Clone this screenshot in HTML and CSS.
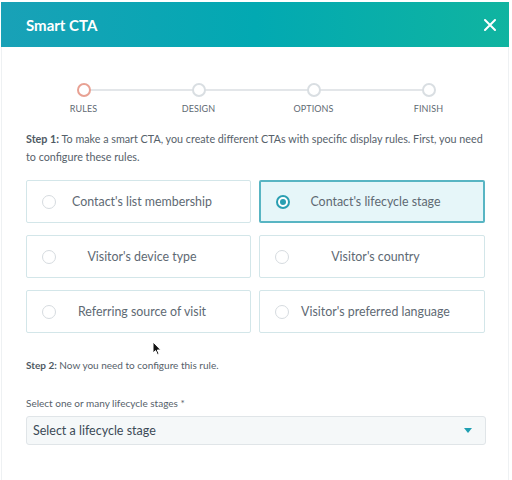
FILE: index.html
```html
<!DOCTYPE html>
<html lang="en">
<head>
<meta charset="utf-8">
<title>Smart CTA</title>
<link rel="stylesheet" href="styles.css">
</head>
<body>
<div class="modal">
  <header class="modal-header">
    <h1 class="modal-title">Smart CTA</h1>
    <button class="close" aria-label="Close">
      <svg width="12" height="12" viewBox="0 0 12 12"><path d="M1 1 L11 11 M11 1 L1 11" stroke="#fff" stroke-width="2" stroke-linecap="round"/></svg>
    </button>
  </header>
  <div class="modal-body">
    <ol class="stepper">
      <li class="step active"><span class="dot"></span><span class="step-label">RULES</span></li>
      <li class="step"><span class="dot"></span><span class="step-label">DESIGN</span></li>
      <li class="step"><span class="dot"></span><span class="step-label">OPTIONS</span></li>
      <li class="step"><span class="dot"></span><span class="step-label">FINISH</span></li>
    </ol>
    <p class="intro"><strong>Step 1:</strong> To make a smart CTA, you create different CTAs with specific display rules. First, you need to configure these rules.</p>
    <div class="rules">
      <label class="rule"><span class="radio"></span><span class="rule-text">Contact's list membership</span></label>
      <label class="rule selected"><span class="radio"></span><span class="rule-text">Contact's lifecycle stage</span></label>
      <label class="rule"><span class="radio"></span><span class="rule-text">Visitor's device type</span></label>
      <label class="rule"><span class="radio"></span><span class="rule-text">Visitor's country</span></label>
      <label class="rule"><span class="radio"></span><span class="rule-text">Referring source of visit</span></label>
      <label class="rule"><span class="radio"></span><span class="rule-text">Visitor's preferred language</span></label>
    </div>
    <p class="step2"><strong>Step 2:</strong> Now you need to configure this rule.</p>
    <p class="field-label">Select one or many lifecycle stages *</p>
    <div class="select">
      <span>Select a lifecycle stage</span>
      <svg width="8" height="5" viewBox="0 0 8 5"><path d="M0 0 H8 L4 5 Z" fill="#1f9fb2"/></svg>
    </div>
  </div>
  <svg class="cursor" width="10" height="15" viewBox="0 0 10 15"><path d="M1 1 L1 12 L3.6 9.6 L5.4 13.6 L7 12.9 L5.3 9 L8.8 9 Z" fill="#111" stroke="#fff" stroke-width="1"/></svg>
</div>
</body>
</html>
```

FILE: styles.css
```css
* { box-sizing: border-box; }
html, body { margin: 0; padding: 0; background: #fff; }
body {
  font-family: Lato, "Noto Sans", "Liberation Sans", sans-serif;
  color: #4a5863;
}
.modal {
  position: relative;
  width: 508px;
  margin: 2px 0 0 1px;
  height: 478px;
}
.modal-header {
  height: 45px;
  display: flex;
  align-items: center;
  justify-content: space-between;
  padding: 0 12px 0 25px;
  background: linear-gradient(90deg, #19a1b7 0%, #02a9b2 50%, #10b4a0 100%);
}
.modal-title {
  margin: 0;
  font-size: 15px;
  font-weight: 700;
  color: #fff;
}
.close {
  background: none;
  border: 0;
  padding: 0;
  width: 14px;
  height: 14px;
  display: flex;
  align-items: center;
  justify-content: center;
}
.modal-body {
  height: 433px;
  border-left: 1px solid #eef1f3;
  border-right: 1px solid #eef1f3;
  padding: 36px 22px 0 24px;
}
.stepper {
  list-style: none;
  margin: 0;
  padding: 0;
  display: grid;
  grid-template-columns: repeat(4, 1fr);
}
.step {
  position: relative;
  display: flex;
  flex-direction: column;
  align-items: center;
}
.step + .step::before {
  content: "";
  position: absolute;
  top: 6px;
  left: -50%;
  width: 100%;
  height: 2px;
  background: #e3e6e9;
}
.dot {
  position: relative;
  z-index: 1;
  width: 14px;
  height: 14px;
  border-radius: 50%;
  border: 2px solid #d9dee2;
  background: #fff;
}
.step.active .dot { border-color: #e8a193; }
.step-label {
  margin-top: 6px;
  font-size: 9px;
  line-height: 11px;
  color: #5f6a73;
  letter-spacing: 0.1px;
}
.intro {
  margin: 16px 0 0;
  font-size: 10.75px;
  line-height: 18px;
  color: #56616a;
}
strong { font-weight: 700; color: #4f5a64; }
.rules {
  margin-top: 14px;
  display: grid;
  grid-template-columns: 225px 226px;
  column-gap: 8px;
  row-gap: 12px;
}
.rule {
  height: 43px;
  display: flex;
  align-items: center;
  padding: 0 22px 0 15px;
  border: 1px solid #d3e6e9;
  border-radius: 2px;
  background: #fff;
}
.rule.selected {
  border: 2px solid #58b5c3;
  background: #e6f6f9;
  padding-left: 15px;
}
.radio {
  flex: none;
  width: 14px;
  height: 14px;
  border-radius: 50%;
  border: 1.5px solid #d6dbdf;
  background: #fff;
  display: flex;
  align-items: center;
  justify-content: center;
}
.rule.selected .radio { border: 2px solid #2a9fb2; }
.rule.selected .radio::after {
  content: "";
  width: 6px;
  height: 6px;
  border-radius: 50%;
  background: #2a9fb2;
}
.rule-text {
  flex: 1;
  text-align: center;
  font-size: 12.4px;
  color: #5e6973;
  white-space: nowrap;
}
.step2 {
  margin: 25px 0 0;
  font-size: 10px;
  line-height: 14px;
  color: #56616a;
}
.field-label {
  margin: 24px 0 0;
  font-size: 10px;
  line-height: 14px;
  color: #56616a;
}
.select {
  margin-top: 6px;
  height: 29px;
  display: flex;
  align-items: center;
  justify-content: space-between;
  padding: 0 13px 0 6px;
  background: #f5f8f9;
  border: 1px solid #e0e5e8;
  border-radius: 3px;
  font-size: 12.5px;
  color: #3b4a56;
}
.cursor {
  position: absolute;
  left: 151px;
  top: 339px;
}
```
